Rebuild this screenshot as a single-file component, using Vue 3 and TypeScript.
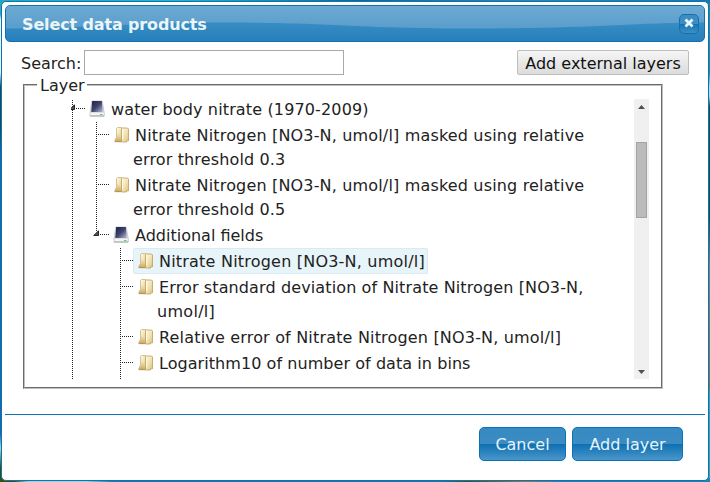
<script setup lang="ts">
import { ref } from 'vue'

interface Line {
  text: string
  tracking: number
}

interface Row {
  level: number
  kind: 'group' | 'layer'
  lines: Line[]
  selected?: boolean
}

const search = ref('')
const rows: Row[] = [
  { level: 0, kind: 'group', lines: [{ text: 'water body nitrate (1970-2009)', tracking: 0.14 }] },
  {
    level: 1,
    kind: 'layer',
    lines: [
      { text: 'Nitrate Nitrogen [NO3-N, umol/l] masked using relative', tracking: 0.165 },
      { text: 'error threshold 0.3', tracking: 0.14 },
    ],
  },
  {
    level: 1,
    kind: 'layer',
    lines: [
      { text: 'Nitrate Nitrogen [NO3-N, umol/l] masked using relative', tracking: 0.165 },
      { text: 'error threshold 0.5', tracking: 0.14 },
    ],
  },
  { level: 1, kind: 'group', lines: [{ text: 'Additional fields', tracking: 0 }] },
  { level: 2, kind: 'layer', lines: [{ text: 'Nitrate Nitrogen [NO3-N, umol/l]', tracking: 0.21 }], selected: true },
  {
    level: 2,
    kind: 'layer',
    lines: [
      { text: 'Error standard deviation of Nitrate Nitrogen [NO3-N,', tracking: 0.12 },
      { text: 'umol/l]', tracking: 0.3 },
    ],
  },
  { level: 2, kind: 'layer', lines: [{ text: 'Relative error of Nitrate Nitrogen [NO3-N, umol/l]', tracking: 0.18 }] },
  { level: 2, kind: 'layer', lines: [{ text: 'Logarithm10 of number of data in bins', tracking: 0.06 }] },
  { level: 2, kind: 'layer', lines: [] },
]

function guide(row: Row, column: number): string {
  return column === row.level || column === 0 ? 'line' : 'blank'
}

function columns(row: Row): number[] {
  return Array.from({ length: row.level + 1 }, (_, i) => i)
}
</script>

<template>
  <div class="map">
    <section class="dialog">
      <header class="titlebar">
        <svg class="wave" viewBox="0 0 698 35" preserveAspectRatio="none">
          <defs>
            <linearGradient id="gloss" x1="0" y1="0" x2="0" y2="1">
              <stop offset="0" stop-color="#6baad3" />
              <stop offset="1" stop-color="#5b9dcb" />
            </linearGradient>
          </defs>
          <path
            d="M0 0H698V16.500C620 17 590 22.500 464 22.500C350 22.500 330 16.500 214 16.500C120 16.500 80 22.500 0 22.500Z"
            fill="url(#gloss)"
          />
        </svg>
        <span class="title">Select data products</span>
        <button class="close" type="button" aria-label="Close">
          <svg width="18" height="18" viewBox="0 0 18 18">
            <path d="M5.500 5.500L12.500 12.500M12.500 5.500L5.500 12.500" stroke="#e9f7ff" stroke-width="2.800" />
          </svg>
        </button>
      </header>

      <div class="content">
        <div class="toolbar">
          <label class="search">Search:<input v-model="search" type="text" /></label>
          <button class="external" type="button">Add external layers</button>
        </div>
        <fieldset class="layers">
          <legend>Layer</legend>
          <div class="scroller">
            <div class="tree">
              <div v-for="(row, i) in rows" :key="i" class="row">
                <div
                  v-for="c in columns(row)"
                  :key="c"
                  class="guide"
                  :class="[guide(row, c), { own: c === row.level, end: c === row.level && c === 1 && row.kind === 'group' }]"
                >
                  <svg v-if="c === row.level && row.kind === 'group'" class="arrow" width="6" height="6" viewBox="0 0 6 6">
                    <path d="M5.500 .8V5.500H.8Z" fill="#555" stroke="#222" stroke-width="1" />
                  </svg>
                </div>
                <div class="node" :class="{ selected: row.selected }">
                  <svg v-if="row.kind === 'group'" class="icon" width="18" height="18" viewBox="0 0 18 18">
                    <defs>
                      <linearGradient id="screen" x1="0" y1="0" x2="1" y2="1">
                        <stop offset="0" stop-color="#1c2048" />
                        <stop offset=".5" stop-color="#40446c" />
                        <stop offset="1" stop-color="#b8bbdc" />
                      </linearGradient>
                    </defs>
                    <path d="M2.800 1H13.200L15.200 12.500V16H1V12.500Z" fill="#dedede" stroke="#c4c4c4" stroke-width=".8" />
                    <path d="M3.200 1H12.800L13.800 12H2.200Z" fill="url(#screen)" />
                    <path d="M1.500 13H14.800V15.300H1.500Z" fill="#f4f4f4" />
                    <path d="M1 16H15.200" stroke="#9c9c9c" stroke-width=".8" />
                    <path d="M11 14.500H13.500" stroke="#56d65e" />
                  </svg>
                  <svg v-else class="icon" width="18" height="18" viewBox="0 0 18 18">
                    <defs>
                      <linearGradient id="paper" x1="0" y1="0" x2="1" y2="1">
                        <stop offset="0" stop-color="#fffbe6" />
                        <stop offset=".5" stop-color="#f2e3b6" />
                        <stop offset="1" stop-color="#dcbf78" />
                      </linearGradient>
                      <linearGradient id="fold" x1="0" y1="0" x2="0" y2="1">
                        <stop offset="0" stop-color="#f3e6bf" />
                        <stop offset="1" stop-color="#c9a55a" />
                      </linearGradient>
                    </defs>
                    <path d="M.8 15.500L3 12V16Z" fill="#b5b5b5" />
                    <path d="M3.500 2.300L4.300 1.500H9V14H3.500Z" fill="url(#paper)" stroke="#cdb881" stroke-width=".8" />
                    <path d="M2.200 16V12.500L4 10.500V7.500H6.500V10.500L8.300 12V16Z" fill="url(#fold)" />
                    <path d="M2.200 15.700H8.300" stroke="#ac8a45" stroke-width=".8" />
                    <path d="M8.500 2.800L9.500 2H14.500L15.500 3V14.800H13.500V16H8.500Z" fill="url(#paper)" stroke="#bd9e5c" stroke-width=".8" />
                    <path d="M9.500 3V13" stroke="#fffbea" />
                  </svg>
                  <div class="label">
                    <div
                      v-for="(line, n) in row.lines"
                      :key="n"
                      class="text"
                      :class="{ wrapped: n > 0 }"
                      :style="{ letterSpacing: line.tracking + 'px' }"
                    >{{ line.text }}</div>
                  </div>
                </div>
              </div>
            </div>
            <div class="scrollbar">
              <svg width="15" height="15" viewBox="0 0 15 15"><path d="M4 10H11L7.500 6Z" fill="#505050" /></svg>
              <div class="track"><div class="thumb"></div></div>
              <svg width="15" height="15" viewBox="0 0 15 15"><path d="M4 6H11L7.500 10Z" fill="#505050" /></svg>
            </div>
          </div>
        </fieldset>
      </div>

      <footer class="actions">
        <button class="primary cancel" type="button">Cancel</button>
        <button class="primary add" type="button">Add layer</button>
      </footer>
    </section>
  </div>
</template>

<style>
body { margin: 0; }
</style>

<style scoped>
* { box-sizing: border-box; }
.map {
  width: 710px;
  height: 482px;
  padding: 1px;
  overflow: hidden;
  background:
    linear-gradient(90deg, #28a7b7, #2eafc0 25%, #126a91 50%, #2e86a7 75%, #1679aa) 0 0 / 100% 3px no-repeat,
    linear-gradient(90deg, #32500f 0 2%, #8fdbe0 4% 12%, #1679aa 16% 62%, #3f5320 66%, #8d7a4a 74%, #1b84b5 79%) 0 100% / 100% 4px no-repeat,
    linear-gradient(#2fa9c0 0 3%, #e4f3f6 4% 15%, #1d4c46 18% 26%, #1c67a4 32% 90%, #9fdcd0 93%, #32500f 97%) 0 0 / 5px 100% no-repeat,
    linear-gradient(#168aac 0 15%, #9fe3f2 18% 20%, #1e4a3e 22% 45%, #6e8474 55%, #7d7650 80%, #2aa4c4 82%) 100% 0 / 5px 100% no-repeat;
  font: 16px/24px "DejaVu Sans", Verdana, sans-serif;
  color: #222;
}
.dialog {
  display: flex;
  flex-direction: column;
  width: 708px;
  height: 480px;
  padding: 3px;
  border: 1px solid #0b73b8;
  border-radius: 5px;
  background: #fff;
}
button, input { font: inherit; margin: 0; padding: 0; }
.titlebar {
  display: grid;
  grid-template-columns: 1fr auto;
  align-items: center;
  flex: none;
  height: 37px;
  padding: 0 5px 0 16px;
  border: 1px solid #1470ae;
  border-radius: 5px;
  background: linear-gradient(#4798cb, #2680bc);
  overflow: hidden;
}
.wave { grid-area: 1 / 1 / 2 / 3; width: 698px; height: 35px; margin: 0 -5px 0 -16px; }
.title { grid-area: 1 / 1; padding-top: 2px; color: #eaf5f7; font-weight: bold; letter-spacing: -.14px; z-index: 1; }
.close {
  grid-area: 1 / 2;
  z-index: 1;
  width: 20px;
  height: 20px;
  border: 1px solid #156fae;
  border-radius: 5px;
  background: linear-gradient(#3b8dc3 48%, #1674b4 52%, #3c8fc5);
}
.close svg { display: block; margin-top: -1px; }
.content { flex: 1; padding: 8px 16px 0; }
.toolbar { display: flex; justify-content: space-between; height: 25px; }
.search { display: flex; line-height: 27px; }
.search input { width: 260px; height: 25px; margin-left: 3px; border: 1px solid #a9a9a9; background: #fff; outline: 0; }
.external {
  width: 172px;
  height: 25px;
  padding-top: 1px;
  border: 1px solid #bdbdbd;
  border-radius: 2px;
  background: linear-gradient(#f5f5f5, #dcdcdc);
  color: #111;
}
.layers {
  width: 640px;
  height: 314px;
  margin: 0 0 0 2px;
  padding: 4px 12px 0 46px;
  border: 2px groove silver;
  min-width: 0;
}
legend { height: 20px; line-height: 22px; margin-left: -34px; padding: 0 2px 0 3px; }
.scroller { display: flex; height: 280px; overflow: hidden; }
.tree { flex: 1; margin-top: -3px; }
.row { display: flex; align-items: stretch; min-height: 26px; }
.guide { flex: none; display: flex; width: 24px; }
.line { background: repeating-linear-gradient(#222 0 1px, transparent 1px 2px) 1px 0 / 1px 100% no-repeat; }
.own {
  width: 14px;
  background:
    repeating-linear-gradient(#222 0 1px, transparent 1px 2px) 1px 0 / 1px 100% no-repeat,
    repeating-linear-gradient(90deg, #222 0 1px, transparent 1px 2px) 3px 12px / 11px 1px no-repeat;
}
.end {
  background:
    repeating-linear-gradient(#222 0 1px, transparent 1px 2px) 1px 0 / 1px 9px no-repeat,
    repeating-linear-gradient(90deg, #222 0 1px, transparent 1px 2px) 3px 12px / 11px 1px no-repeat;
}
.arrow { flex: none; margin: 8px 0 0 -2px; }
.node { display: flex; padding: 0 2px; border: 1px solid transparent; border-radius: 2px; white-space: nowrap; }
.selected { border-color: #d9eaf2; background: #e7f4f9; }
.icon { flex: none; margin: 3px 4px 0 1px; }
.text { height: 24px; line-height: 26px; }
.wrapped { margin-left: -2px; }
.scrollbar { flex: none; display: flex; flex-direction: column; width: 15px; background: #f0f0f0; }
.track { flex: 1; padding: 28px 2px 0; }
.thumb { height: 76px; border: 1px solid #a4a4a4; background: #bbb; }
.scrollbar svg { display: block; flex: none; }
.actions {
  display: flex;
  justify-content: flex-end;
  align-items: flex-start;
  gap: 6px;
  flex: none;
  height: 63px;
  padding: 12px 22px 0 0;
  border-top: 1px solid #0b73b8;
}
.primary {
  height: 34px;
  padding-top: 1px;
  border: 1px solid #0a73b7;
  border-radius: 5px;
  color: #e7f3fa;
  background: linear-gradient(#378ac2 0, #3a8cc2 49%, #0d70b2 51%, #4b96ca);
}
.cancel { width: 87px; }
.add { width: 111px; }
</style>
